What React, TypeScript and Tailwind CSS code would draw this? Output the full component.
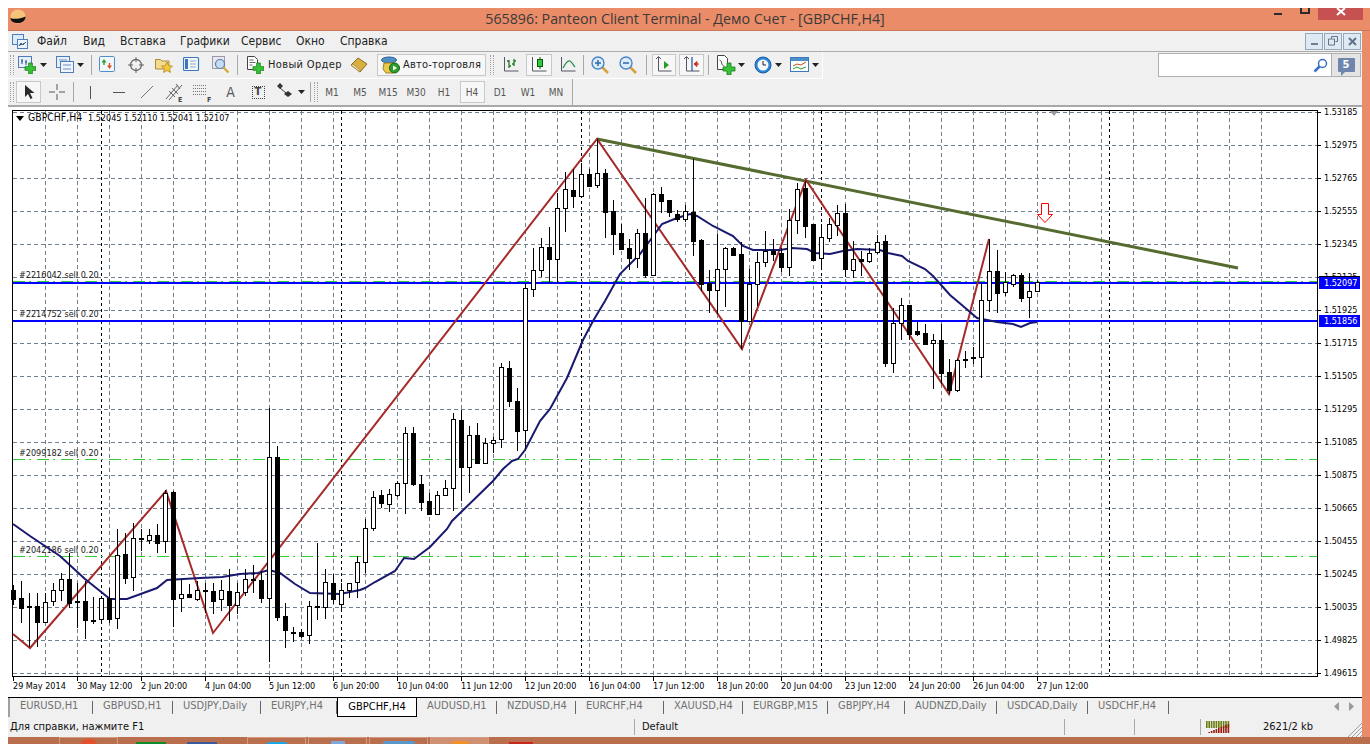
import type { ReactNode } from "react";

const uiFont = "font-['DejaVu_Sans_Condensed','Liberation_Sans',sans-serif]";

// high, body top, body bottom, low, white candle
const candles: [number, number, number, number, number][] = [
  [584, 589, 598, 604, 0], [580, 597, 607, 622, 0], [592, 605, 606, 646, 0], [592, 605, 621, 646, 0],
  [592, 601, 621, 622, 1], [582, 589, 600, 605, 1], [572, 578, 589, 600, 1], [552, 578, 602, 607, 0],
  [582, 600, 601, 627, 0], [580, 600, 619, 638, 0], [596, 619, 620, 623, 0], [595, 597, 618, 622, 1],
  [587, 597, 618, 622, 0], [528, 554, 617, 628, 1], [532, 553, 577, 583, 0], [522, 537, 576, 590, 1],
  [528, 537, 538, 550, 0], [528, 534, 539, 543, 1], [523, 534, 542, 552, 0], [489, 492, 540, 552, 1],
  [490, 491, 598, 626, 0], [578, 593, 597, 611, 1], [583, 593, 596, 597, 0], [580, 589, 598, 600, 1],
  [582, 589, 590, 612, 0], [582, 590, 600, 613, 0], [579, 589, 598, 610, 1], [568, 590, 604, 620, 0],
  [582, 591, 604, 613, 1], [568, 578, 591, 595, 1], [564, 578, 579, 592, 0], [570, 579, 597, 602, 0],
  [407, 456, 597, 661, 1], [445, 456, 616, 620, 0], [602, 615, 629, 647, 0], [626, 631, 632, 641, 0],
  [628, 631, 635, 637, 0], [600, 605, 634, 643, 1], [542, 605, 606, 619, 0], [568, 581, 606, 618, 1],
  [573, 582, 598, 603, 0], [582, 589, 603, 609, 1], [582, 582, 589, 597, 1], [555, 561, 581, 597, 1],
  [518, 527, 561, 572, 1], [490, 496, 527, 530, 1], [489, 494, 502, 507, 0], [488, 493, 503, 511, 1],
  [480, 482, 494, 496, 1], [426, 432, 482, 513, 1], [426, 432, 483, 485, 0], [474, 483, 501, 510, 0],
  [492, 500, 513, 513, 0], [490, 494, 513, 514, 1], [479, 487, 494, 495, 1], [412, 418, 487, 510, 1],
  [409, 419, 466, 500, 0], [425, 434, 466, 492, 1], [422, 434, 462, 462, 0], [437, 442, 462, 462, 1],
  [436, 439, 442, 452, 1], [362, 366, 438, 447, 1], [360, 367, 400, 406, 0], [387, 400, 430, 450, 0],
  [282, 287, 429, 448, 1], [247, 269, 288, 296, 1], [237, 246, 269, 276, 1], [226, 246, 258, 282, 0],
  [192, 207, 258, 282, 1], [171, 188, 207, 231, 1], [168, 189, 195, 207, 0], [162, 173, 195, 196, 1],
  [168, 173, 185, 185, 0], [138, 172, 184, 187, 1], [168, 172, 211, 237, 0], [199, 210, 233, 254, 0],
  [223, 232, 248, 248, 0], [238, 247, 257, 269, 0], [228, 232, 257, 267, 1], [197, 232, 274, 277, 0],
  [192, 193, 274, 275, 1], [186, 193, 200, 212, 0], [199, 199, 211, 216, 0], [209, 213, 218, 221, 0],
  [204, 210, 218, 221, 1], [158, 211, 240, 255, 0], [238, 239, 283, 290, 0], [269, 282, 289, 312, 0],
  [233, 268, 289, 313, 1], [246, 247, 268, 306, 1], [246, 247, 254, 254, 0], [241, 253, 320, 348, 0],
  [268, 283, 320, 320, 1], [251, 261, 283, 305, 1], [230, 250, 261, 266, 1], [238, 250, 253, 260, 0],
  [247, 252, 266, 271, 0], [208, 219, 266, 275, 1], [182, 188, 219, 233, 1], [180, 187, 225, 237, 0],
  [223, 223, 259, 260, 0], [223, 236, 257, 268, 1], [217, 223, 237, 241, 1], [204, 212, 224, 235, 1],
  [203, 212, 268, 276, 0], [240, 258, 269, 277, 1], [250, 258, 260, 275, 0], [247, 252, 260, 262, 1],
  [234, 241, 251, 253, 1], [234, 240, 362, 366, 0], [307, 322, 362, 372, 1], [297, 304, 322, 339, 1],
  [304, 304, 333, 339, 0], [321, 330, 333, 335, 0], [323, 332, 343, 343, 0], [333, 339, 342, 388, 1],
  [323, 339, 372, 383, 0], [358, 371, 389, 393, 0], [358, 359, 389, 391, 1], [350, 358, 359, 367, 1],
  [346, 356, 357, 363, 0], [282, 299, 356, 377, 1], [238, 270, 299, 311, 1], [249, 270, 292, 312, 0],
  [271, 281, 291, 295, 1], [273, 274, 283, 286, 1], [272, 274, 297, 301, 0], [272, 290, 296, 317, 1],
  [279, 281, 290, 290, 1],
];

const maLine =
  "13,523 30,535 60,555 85,578 100,590 110,598 127,598 157,587 167,579 200,577 222,576 240,573 258,572 269,569 280,572 295,583 310,592 340,593 345,592 360,589 365,587 375,581 395,570 404,557 414,558 430,546 447,528 452,520 493,480 503,468 512,460 518,458 525,449 540,420 550,408 567,377 583,339 593,320 605,300 620,273 640,253 657,230 662,223 677,217 690,213 697,215 713,225 733,235 743,245 753,249 780,249 792,247 807,248 815,252 830,253 843,250 857,248 880,249 888,252 902,255 908,260 925,268 933,275 942,285 950,294 963,305 977,317 987,319 997,321 1013,323 1021,326 1030,322 1037,321";

const prices = ["1.53185", "1.52975", "1.52765", "1.52555", "1.52345", "1.52135", "1.51925", "1.51715", "1.51505", "1.51295", "1.51085", "1.50875", "1.50665", "1.50455", "1.50245", "1.50035", "1.49825", "1.49615"];
const dates = ["29 May 2014", "30 May 12:00", "2 Jun 20:00", "4 Jun 04:00", "5 Jun 12:00", "6 Jun 20:00", "10 Jun 04:00", "11 Jun 12:00", "12 Jun 20:00", "16 Jun 04:00", "17 Jun 12:00", "18 Jun 20:00", "20 Jun 04:00", "23 Jun 12:00", "24 Jun 20:00", "26 Jun 04:00", "27 Jun 12:00"];
const gridX = Array.from({ length: 39 }, (_, i) => 45 + i * 32);
const gridY = prices.map((_, i) => 111 + i * 33);

const orders = [
  { label: "#2216042 sell 0.20", y: 277 },
  { label: "#2214752 sell 0.20", y: 316 },
  { label: "#2099182 sell 0.20", y: 455 },
  { label: "#2042186 sell 0.20", y: 552 },
];

function Chart() {
  return (
    <svg width="1354" height="590" viewBox="8 106 1354 590" className={`block shrink-0 bg-white text-[9px] ${uiFont}`}>
      <rect x="12.5" y="109.5" width="1305" height="566" fill="none" stroke="#000" />
      <g shapeRendering="crispEdges">
        {gridY.map((y) => (
          <line key={y} x1="13" x2="1317" y1={y + 0.5} y2={y + 0.5} stroke="#708090" strokeDasharray="4 3" />
        ))}
        {gridX.map((x) => (
          <line key={x} x1={x + 0.5} x2={x + 0.5} y1="110" y2="675" stroke="#708090" strokeDasharray="4 3" />
        ))}
        {[101, 341, 581, 821, 1109].map((x) => (
          <line key={x} x1={x + 0.5} x2={x + 0.5} y1="110" y2="675" stroke="#000" strokeDasharray="3 3" />
        ))}
        <line x1="13" x2="1317" y1="280.5" y2="280.5" stroke="#32CD32" strokeDasharray="12 4 2 6" />
        <line x1="13" x2="1317" y1="458.5" y2="458.5" stroke="#32CD32" strokeDasharray="12 4 2 6" />
        <line x1="13" x2="1317" y1="555.5" y2="555.5" stroke="#32CD32" strokeDasharray="12 4 2 6" />
        <rect x="13" y="281" width="1304" height="2" fill="#0000FF" />
        <rect x="13" y="319" width="1304" height="2" fill="#0000FF" />
      </g>

      {orders.map((o) => (
        <text key={o.y} x="19" y={o.y} fill="#222">{o.label}</text>
      ))}

      <polyline points="597,138 1238,267" fill="none" stroke="#556B2F" strokeWidth="3" />
      <polyline points="13,633 30,647 166,490 213,632 597,138 742,348 806,179 949,393 989,238" fill="none" stroke="#A52A2A" strokeWidth="2" />
      <polyline points={maLine} fill="none" stroke="#191970" strokeWidth="2" />

      <g shapeRendering="crispEdges">
        {candles.map(([h, t, b, l, white], i) => {
          const x = 13 + i * 8;
          return (
            <g key={x}>
              <line x1={x + 0.5} x2={x + 0.5} y1={h} y2={l} stroke="#000" />
              <rect x={x - 1.5} y={t + 0.5} width="4" height={b - t} fill={white ? "#fff" : "#000"} stroke="#000" />
            </g>
          );
        })}
      </g>

      <path d="M1041.5 202.5h7v11h4l-7.5 8-7.5-8h4z" fill="#fff" stroke="#FF0000" />
      <path d="M1050 110l4 5 4-5z" fill="#9a9a9a" />

      <path d="M16 115h8l-4 5z" fill="#000" />
      <text y="120" fill="#000">
        <tspan x="28" fontSize="10.4">GBPCHF,H4</tspan>
        <tspan x="88">1.52045</tspan>
        <tspan x="124">1.52110</tspan>
        <tspan x="160">1.52041</tspan>
        <tspan x="196">1.52107</tspan>
      </text>

      <g shapeRendering="crispEdges">
        {gridY.map((y) => (
          <line key={y} x1="1317" x2="1321" y1={y + 0.5} y2={y + 0.5} stroke="#000" />
        ))}
        {dates.map((_, i) => (
          <line key={i} x1={13.5 + i * 64} x2={13.5 + i * 64} y1="675" y2="680" stroke="#000" />
        ))}
      </g>
      {prices.map((p, i) => (
        <text key={p} x="1324" y={114 + i * 33} fill="#000">{p}</text>
      ))}
      {dates.map((d, i) => (
        <text key={d} x={13 + i * 64} y="688" fill="#000">{d}</text>
      ))}

      <g shapeRendering="crispEdges">
        <rect x="1319" y="275" width="41" height="1" fill="#000" />
        <rect x="1319" y="276" width="41" height="12" fill="#0000FF" />
        <rect x="1319" y="314" width="41" height="12" fill="#0000FF" />
      </g>
      <text x="1324" y="285" fill="#fff">1.52097</text>
      <text x="1324" y="323" fill="#fff">1.51856</text>
    </svg>
  );
}

function Grip({ className = "" }: { className?: string }) {
  return <div className={`h-[20px] w-[4px] shrink-0 border-x border-dotted border-[#a0a0a0] ${className}`} />;
}

function Sep({ className = "" }: { className?: string }) {
  return <div className={`h-[20px] w-px shrink-0 bg-[#a8a8a8] ${className}`} />;
}

function Caret() {
  return (
    <div className="flex w-[10px] shrink-0 justify-center">
      <svg width="7" height="4"><path d="M0 0h7L3.500 4z" fill="#222" /></svg>
    </div>
  );
}

function Cell({ className, children }: { className: string; children?: ReactNode }) {
  return <div className={`flex h-full shrink-0 items-center justify-center ${className}`}>{children}</div>;
}

function Pressed({ className, children }: { className: string; children: ReactNode }) {
  return (
    <div className={`flex h-[22px] shrink-0 items-center border border-[#c8c8c8] bg-[#f7f7f7] ${className}`}>
      {children}
    </div>
  );
}

function Plus({ x = 7, y = 7, s = 11 }: { x?: number; y?: number; s?: number }) {
  const a = s / 3;
  return (
    <path
      transform={`translate(${x} ${y})`}
      d={`M${a} 0h${a}v${a}h${a}v${a}h${-a}v${a}h${-a}v${-a}H0V${a}h${a}z`}
      fill="#35c435"
      stroke="#1c7a1c"
      strokeWidth="0.8"
    />
  );
}

function Icon({ w = 18, h = 18, children }: { w?: number; h?: number; children: ReactNode }) {
  return <svg width={w} height={h} viewBox={`0 0 ${w} ${h}`} fill="none" className="block shrink-0">{children}</svg>;
}

const NewChartIcon = () => (
  <Icon>
    <rect x="0.5" y="0.5" width="13" height="11" fill="#e6f0fb" stroke="#4f7db8" />
    <path d="M4 3v5M8 4v5M3 5h2M7 6h2" stroke="#2a4f86" />
    <Plus />
  </Icon>
);
const ProfilesIcon = () => (
  <Icon>
    <rect x="0.5" y="0.5" width="13" height="11" fill="#e6f0fb" stroke="#4f7db8" />
    <rect x="4.5" y="5.5" width="13" height="11" fill="#eef4fc" stroke="#4f7db8" />
    <path d="M3 4h8M7 9h8M7 13h8" stroke="#6d8fbe" />
  </Icon>
);
const WatchIcon = () => (
  <Icon>
    <rect x="0.5" y="0.5" width="15" height="15" rx="1" fill="#f2f7fc" stroke="#4f8fc8" />
    <path d="M5 3L2.500 6.500h1.800V9h1.400V6.500h1.800z" fill="#2e9a2e" />
    <path d="M10.500 13L8 9.500h1.800V7h1.400v2.500h1.800z" fill="#e0501c" />
  </Icon>
);
const CrossCircleIcon = () => (
  <Icon>
    <circle cx="9" cy="9" r="5.5" stroke="#666" strokeWidth="1.3" />
    <path d="M9 1v5M9 12v5M1 9h5M12 9h5" stroke="#666" />
  </Icon>
);
const FolderStarIcon = () => (
  <Icon>
    <path d="M0.500 3.500h5l1.500 1.500h7v8h-13.500z" fill="#f5dc8c" stroke="#a88a3a" />
    <path d="M12 6l1.700 3.700 3.800.4-2.900 2.500.9 3.900-3.500-2-3.500 2 .9-3.900-2.900-2.500 3.800-.4z" fill="#f7c83a" stroke="#b08a20" strokeWidth="0.8" />
  </Icon>
);
const TerminalIcon = () => (
  <Icon>
    <rect x="0.5" y="1.5" width="15" height="13" rx="1" fill="#f4f8fd" stroke="#3a78c0" strokeWidth="1.2" />
    <rect x="2" y="3" width="3" height="10" fill="#3a78c0" />
    <path d="M7 5h6M7 8h6M7 11h6" stroke="#8aa8cc" />
  </Icon>
);
const TesterIcon = () => (
  <Icon>
    <rect x="0.5" y="0.5" width="12" height="12" fill="#e8e8ee" stroke="#9a9aa8" />
    <circle cx="8" cy="8" r="4.5" fill="#c6dcf2" stroke="#5a7ca8" strokeWidth="1.2" />
    <path d="M11.500 11.500l5 5" stroke="#d8a73a" strokeWidth="2.2" />
  </Icon>
);
const NewOrderIcon = () => (
  <Icon>
    <path d="M1.500 0.500h7l3 3v10h-10z" fill="#fff" stroke="#444" />
    <path d="M3.500 4h4M3.500 6.500h6M3.500 9h3" stroke="#666" />
    <Plus />
  </Icon>
);
const BookIcon = () => (
  <Icon>
    <path d="M1 9l7-7 9 6-7 8z" fill="#d8b040" stroke="#8a6a20" />
    <path d="M1 9l9 7v-2L3 8z" fill="#f5e6b0" stroke="#8a6a20" strokeWidth="0.6" />
  </Icon>
);
const AutoTradeIcon = () => (
  <Icon w={19} h={18}>
    <ellipse cx="8" cy="4" rx="7.5" ry="3" fill="#4f8fc8" stroke="#2e5f96" />
    <path d="M3 7h11l1 6-3 4H5l-3-4z" fill="#ecc94a" stroke="#a08420" />
    <circle cx="13.500" cy="12" r="5" fill="#2aa02a" stroke="#156015" />
    <path d="M12 9.500l4 2.500-4 2.500z" fill="#fff" />
  </Icon>
);
const BarsIcon = () => (
  <Icon>
    <path d="M2.500 1v14h14" stroke="#556" />
    <path d="M7 4v8M5 5h2M7 10h2M12 3v7M10 8h2M12 5h2" stroke="#1f7a1f" strokeWidth="1.3" />
  </Icon>
);
const CandlesIcon = () => (
  <Icon>
    <path d="M2.500 1v14h14" stroke="#556" />
    <path d="M10 1v12" stroke="#0a5a0a" />
    <rect x="7.5" y="3.5" width="5" height="7" fill="#2ecc40" stroke="#0a5a0a" />
  </Icon>
);
const LineIcon = () => (
  <Icon>
    <path d="M2.500 1v14h14" stroke="#556" />
    <path d="M4 12c3-6 5-8 7-7s3 4 5 6" stroke="#1f8a3a" strokeWidth="1.2" />
  </Icon>
);
const ZoomIcon = ({ plus }: { plus?: boolean }) => (
  <Icon>
    <path d="M11 11l6 6" stroke="#d3a23a" strokeWidth="2.5" />
    <circle cx="7" cy="7" r="6" fill="#dcecfa" stroke="#4a86c6" strokeWidth="1.4" />
    <path d={plus ? "M4 7h6M7 4v6" : "M4 7h6"} stroke="#2f68a8" strokeWidth="1.5" />
  </Icon>
);
const AutoScrollIcon = () => (
  <Icon>
    <path d="M3.500 1v14h13M1 3l2.500-2.500L6 3" stroke="#556" />
    <path d="M9 5v8l5-4z" fill="#22a022" />
  </Icon>
);
const ChartShiftIcon = () => (
  <Icon>
    <path d="M3.500 1v14h13M1 3l2.500-2.500L6 3" stroke="#556" />
    <path d="M9 1v14" stroke="#2c5f9e" strokeWidth="1.3" />
    <path d="M16 8h-3M11 8l3-2.500v5z" fill="#d03020" stroke="#d03020" />
  </Icon>
);
const TemplateIcon = () => (
  <Icon w={20} h={20}>
    <path d="M1.500 0.500h7l3 3v11h-10z" fill="#fff" stroke="#444" />
    <path d="M3.500 5c3 0 1 6 5 6" stroke="#555" />
    <Plus x={7} y={8} s={12} />
  </Icon>
);
const ClockIcon = () => (
  <Icon>
    <circle cx="9" cy="9" r="8" fill="#2e86d8" stroke="#1a5a9e" />
    <circle cx="9" cy="9" r="5.5" fill="#f4f8fc" />
    <path d="M9 5v4h3" stroke="#222" />
  </Icon>
);
const IndicatorIcon = () => (
  <Icon w={20} h={18}>
    <rect x="0.5" y="1.5" width="18" height="14" fill="#fff" stroke="#3a78c0" />
    <rect x="1" y="2" width="17" height="3" fill="#4f8fc8" />
    <path d="M3 10l4-2 4 1 5-3" stroke="#c05020" />
    <path d="M3 13l4-2 4 2 5-2" stroke="#2e9a2e" />
  </Icon>
);
const CursorIcon = () => (
  <Icon>
    <path d="M5 2v12l3-3 2.500 5 2-1-2.500-5h4.500z" fill="#2a2a2a" />
  </Icon>
);
const CrosshairIcon = () => (
  <Icon>
    <path d="M9 1v6M9 11v6M1 9h6M11 9h6" stroke="#555" />
  </Icon>
);
const ChannelIcon = () => (
  <Icon w={22} h={24}>
    <path d="M2 19L14 5M5 20L18 5M5 11l6 6M8 8l6 6M12 4l4 5" stroke="#666" />
    <text x="14" y="22" fontSize="7" fontWeight="bold" fill="#444">E</text>
  </Icon>
);
const FiboIcon = () => (
  <Icon w={22} h={24}>
    <path d="M1 5.500h14M1 8.500h14M1 11.500h14M1 14.500h14" stroke="#777" strokeDasharray="1 1" />
    <text x="15" y="22" fontSize="7" fontWeight="bold" fill="#444">F</text>
  </Icon>
);
const ArrowsIcon = () => (
  <Icon>
    <path d="M2 3l3-3 3 3-3 3zM9 11l4-3 4 3-4 3z" fill="#333" />
    <path d="M5 5l6 5" stroke="#333" />
  </Icon>
);

function Toolbar1() {
  return (
    <div className="flex h-[27px] w-[815px] shrink-0 items-center border-r border-b border-white bg-[#f0f0f0]">
      <div className="flex w-[8px] shrink-0 justify-start pl-[2px]"><Grip /></div>
      <Cell className="w-[22px]"><NewChartIcon /></Cell>
      <Caret />
      <Cell className="ml-[6px] w-[21px]"><ProfilesIcon /></Cell>
      <Caret />
      <Sep className="ml-[6px]" />
      <Cell className="w-[32px]"><WatchIcon /></Cell>
      <Cell className="w-[24px]"><CrossCircleIcon /></Cell>
      <Cell className="w-[32px]"><FolderStarIcon /></Cell>
      <Cell className="w-[24px]"><TerminalIcon /></Cell>
      <Cell className="w-[33px]"><TesterIcon /></Cell>
      <Sep />
      <Cell className="ml-[4px] w-[26px]"><NewOrderIcon /></Cell>
      <div className="w-[73px] shrink-0 text-[11px] tracking-[0.35px] whitespace-nowrap text-[#222]">Новый Ордер</div>
      <Cell className="w-[36px]"><BookIcon /></Cell>
      <Pressed className="w-[109px] pl-[3px]">
        <AutoTradeIcon />
        <span className="ml-[3px] text-[11px] tracking-[0.2px] whitespace-nowrap text-[#222]">Авто-торговля</span>
      </Pressed>
      <Grip className="ml-[4px]" />
      <Cell className="ml-[1px] w-[31px]"><BarsIcon /></Cell>
      <Pressed className="w-[26px] justify-center"><CandlesIcon /></Pressed>
      <Cell className="w-[31px]"><LineIcon /></Cell>
      <Sep />
      <Cell className="w-[32px]"><ZoomIcon plus /></Cell>
      <Cell className="w-[24px]"><ZoomIcon /></Cell>
      <Cell className="w-[6px]" />
      <Sep />
      <Pressed className="ml-[5px] w-[24px] justify-center"><AutoScrollIcon /></Pressed>
      <Pressed className="ml-[3px] w-[25px] justify-center"><ChartShiftIcon /></Pressed>
      <Sep className="ml-[4px]" />
      <Cell className="ml-[7px] w-[20px]"><TemplateIcon /></Cell>
      <Caret />
      <Cell className="ml-[7px] w-[20px]"><ClockIcon /></Cell>
      <Caret />
      <Cell className="ml-[7px] w-[20px]"><IndicatorIcon /></Cell>
      <Caret />
    </div>
  );
}

const frames = ["M1", "M5", "M15", "M30", "H1", "H4", "D1", "W1", "MN"];

function Toolbar2() {
  return (
    <div className="flex h-[26px] shrink-0 items-center bg-[#f0f0f0]">
      <div className="flex w-[8px] shrink-0 justify-start pl-[2px]"><Grip /></div>
      <Pressed className="w-[25px] justify-center"><CursorIcon /></Pressed>
      <Cell className="w-[32px]"><CrosshairIcon /></Cell>
      <Sep />
      <Cell className="w-[32px]"><div className="h-[13px] w-px bg-[#555]" /></Cell>
      <Cell className="w-[26px]"><div className="h-px w-[12px] bg-[#555]" /></Cell>
      <Cell className="w-[30px]">
        <Icon w={14} h={14}><path d="M1 13L13 1" stroke="#777" /></Icon>
      </Cell>
      <Cell className="w-[26px]"><ChannelIcon /></Cell>
      <Cell className="w-[29px]"><FiboIcon /></Cell>
      <Cell className="w-[27px] text-[14px] text-[#555]">A</Cell>
      <Cell className="w-[28px]">
        <div className="flex h-[13px] w-[13px] items-center justify-center border border-dotted border-[#444] text-[11px] font-bold text-[#444]">T</div>
      </Cell>
      <Cell className="w-[24px]"><ArrowsIcon /></Cell>
      <Caret />
      <Sep className="ml-[4px]" />
      <Grip className="ml-[3px]" />
      {frames.map((f) => (
        <Cell key={f} className="w-[28px]">
          {f === "H4" ? (
            <div className="flex h-[22px] w-[25px] items-center justify-center border border-[#c8c8c8] bg-[#f7f7f7] text-[10px] text-[#555]">{f}</div>
          ) : (
            <span className="text-[10px] text-[#555]">{f}</span>
          )}
        </Cell>
      ))}
      <Sep className="ml-[2px] h-[26px]" />
    </div>
  );
}

const tabs = [
  { name: "EURUSD,H1", w: "w-[83px]" },
  { name: "GBPUSD,H1", w: "w-[80px]" },
  { name: "USDJPY,Daily", w: "w-[88px]" },
  { name: "EURJPY,H4", w: "w-[76px]" },
  { name: "GBPCHF,H4", w: "w-[80px]", active: true },
  { name: "AUDUSD,H1", w: "w-[80px]" },
  { name: "NZDUSD,H4", w: "w-[79px]" },
  { name: "EURCHF,H4", w: "w-[88px]" },
  { name: "XAUUSD,H4", w: "w-[79px]" },
  { name: "EURGBP,M15", w: "w-[85px]" },
  { name: "GBPJPY,H4", w: "w-[77px]" },
  { name: "AUDNZD,Daily", w: "w-[92px]" },
  { name: "USDCAD,Daily", w: "w-[91px]" },
  { name: "USDCHF,H4", w: "w-[81px]" },
];

function Tabs() {
  return (
    <div className={`flex h-[20px] shrink-0 items-start border-t border-black bg-[#f0f0f0] pr-[8px] text-[11px] ${uiFont}`}>
      <div className="h-full w-[2px] shrink-0 bg-[#a0a0a0]" />
      {tabs.map((t) =>
        t.active ? (
          <div key={t.name} className={`flex h-[19px] shrink-0 items-center justify-center border-x border-b border-black bg-white text-black ${t.w}`}>{t.name}</div>
        ) : (
          <div key={t.name} className={`flex h-[17px] shrink-0 items-center pl-[10px] text-[#707070] ${t.w}`}>
            <span className="flex-1 whitespace-nowrap">{t.name}</span>
            <div className="mt-[2px] h-[13px] w-px bg-[#666]" />
          </div>
        ),
      )}
      <div className="ml-auto flex h-[17px] items-center gap-[10px] text-[#999]">
        <svg width="5" height="9"><path d="M5 0v9L0 4.500z" fill="#999" /></svg>
        <svg width="5" height="9"><path d="M0 0v9l5-4.500z" fill="#999" /></svg>
      </div>
    </div>
  );
}

function StatusBar() {
  return (
    <div className={`relative flex h-[20px] shrink-0 items-center bg-[#f0f0f0] pl-[2px] text-[11px] text-[#111] ${uiFont}`}>
      <div className="w-[624px] whitespace-nowrap">Для справки, нажмите F1</div>
      <div className="h-[16px] w-px bg-[#a8a8a8]" />
      <div className="w-[429px] pl-[7px]">Default</div>
      <div className="h-[16px] w-px bg-[#a8a8a8]" />
      <div className="w-[69px]" />
      <div className="h-[16px] w-px bg-[#a8a8a8]" />
      <div className="w-[65px]" />
      <div className="h-[16px] w-px bg-[#a8a8a8]" />
      <svg width="24" height="14" className="ml-[5px]">
        {Array.from({ length: 10 }, (_, i) => (
          <g key={i}>
            <rect x={i * 2.4} y="1" width="1.6" height={7} fill="#6b7d10" />
            <rect x={i * 2.4} y={13 - i} width="1.6" height={i} fill="#9a1c0c" />
          </g>
        ))}
      </svg>
      <div className="ml-[33px] whitespace-nowrap">2621/2 kb</div>
      <svg width="14" height="14" className="absolute right-0 bottom-0">
        <path d="M14 0L0 14M14 4L4 14M14 8L8 14M14 12l-2 2" stroke="#a0a0a0" />
      </svg>
    </div>
  );
}

function MdiButton({ children }: { children: ReactNode }) {
  return (
    <div className="flex h-[17px] w-[18px] items-center justify-center border border-[#94a9bc] bg-[#dfe9f3]">
      {children}
    </div>
  );
}

function TaskButton({ className, children }: { className: string; children?: ReactNode }) {
  return <div className={`flex h-full justify-center border-x border-t border-[#d49a80] ${className}`}>{children}</div>;
}

export default function App() {
  return (
    <div className={`h-[744px] w-[1370px] overflow-hidden bg-white pt-[8px] pl-[8px] ${uiFont}`}>
      <div className="flex h-[736px] flex-col bg-[#ea8c68]">
        <div className="relative flex h-[23px] shrink-0 items-center border-b border-[#c97a5a]">
          <svg width="16" height="15" className="absolute left-[2px] top-[1px]">
            <ellipse cx="8" cy="7.5" rx="7.5" ry="7" fill="#f4c27a" />
            <path d="M0.500 9c3 1.500 10 1 15-1.500 0 4-3 6.500-7.500 6.500S0.500 12 0.500 9z" fill="#111" />
          </svg>
          <div className="w-[1354px] text-center font-['Open_Sans','Noto_Sans',sans-serif] text-[14.25px] leading-none whitespace-nowrap text-[#3a3a3a]">
            565896: Panteon Client Terminal - Демо Счет - [GBPCHF,H4]
          </div>
          <div className="absolute top-[5px] left-[1266px] h-[2px] w-[8px] bg-[#2b2b2b]" />
          <div className="absolute top-0 left-[1292px] h-[6px] w-[10px] border-x-2 border-b-2 border-[#2b2b2b]" />
          <div className="absolute top-0 left-[1310px] flex h-[12px] w-[45px] items-start justify-center bg-[#c75050]">
            <svg width="10" height="8"><path d="M1 0l8 7M9 0L1 7" stroke="#fff" strokeWidth="2" /></svg>
          </div>
        </div>

        <div className="flex w-[1354px] flex-1 flex-col bg-[#f0f0f0]">
          <div className="flex h-[21px] shrink-0 items-center border-b border-[#aaaaaa] text-[12px] text-[#222]">
            <svg width="16" height="15" className="ml-[4px]">
              <rect x="0.5" y="0.5" width="11" height="10" fill="#dceafa" stroke="#4f7db8" />
              <rect x="5.5" y="5.5" width="10" height="9" fill="#eef4fc" stroke="#4f7db8" />
              <path d="M7 12l2-3 2 2 3-3" stroke="#3a66a0" />
            </svg>
            <div className="ml-[9px] w-[46px]">Файл</div>
            <div className="w-[37px]">Вид</div>
            <div className="w-[60px]">Вставка</div>
            <div className="w-[61px]">Графики</div>
            <div className="w-[55px]">Сервис</div>
            <div className="w-[44px]">Окно</div>
            <div>Справка</div>
            <div className="mr-[1px] ml-auto flex gap-px">
              <MdiButton><div className="mt-[6px] h-[2px] w-[7px] bg-[#6a7f92]" /></MdiButton>
              <MdiButton>
                <svg width="10" height="10"><path d="M3.500 2.500V.5h6v5h-2M.5 3h6v6h-6z" fill="none" stroke="#5f7488" /></svg>
              </MdiButton>
              <MdiButton>
                <svg width="9" height="9"><path d="M1 1l7 7M8 1L1 8" stroke="#5f7488" strokeWidth="2" /></svg>
              </MdiButton>
            </div>
          </div>

          <div className="relative flex h-[27px] shrink-0 items-center">
            <Toolbar1 />
            <div className="absolute top-[1px] left-[1150px] flex h-[24px] w-[203px]">
              <div className="flex flex-1 items-center justify-end border border-[#b0b0b0] bg-white pr-[3px]">
                <svg width="15" height="15">
                  <circle cx="9.5" cy="5.5" r="4" fill="none" stroke="#3a6fc8" strokeWidth="1.5" />
                  <path d="M6.500 8.500L1.500 13.500" stroke="#3a6fc8" strokeWidth="2.5" />
                </svg>
              </div>
              <div className="flex w-[29px] items-center justify-center border-y border-r border-[#b0b0b0] bg-[#e4e4e4]">
                <div className="relative flex h-[14px] w-[17px] items-center justify-center rounded-[1px] bg-[#6e86ae] text-[11px] font-bold text-white">
                  5
                  <div className="absolute -bottom-[4px] left-[3px] h-0 w-0 border-t-[5px] border-r-[5px] border-t-[#6e86ae] border-r-transparent" />
                </div>
              </div>
            </div>
          </div>

          <Toolbar2 />
          <div className="h-[2px] shrink-0 bg-[#a8a8a8]" />
          <Chart />
          <Tabs />
          <StatusBar />
        </div>

        <div className="flex h-[8px] shrink-0 items-start gap-[2px] overflow-hidden bg-[#b96e4e] pl-[51px]">
          <TaskButton className="w-[59px]"><div className="mt-[1px] h-[6px] w-[16px] rounded-t-full bg-[#e2502c]" /></TaskButton>
          <div className="ml-[16px] mt-[5px] h-[3px] w-[30px] bg-[#0f8a2c]" />
          <div className="ml-[19px] mt-[5px] h-[3px] w-[30px] bg-[#3a5a9e]" />
          <TaskButton className="ml-[28px] w-[59px]"><div className="mt-[4px] h-[4px] w-[22px] rounded-t-full bg-[#18a8e8]" /></TaskButton>
          <TaskButton className="w-[59px]"><div className="mt-[3px] h-[5px] w-[14px] bg-[#7fa8d8]" /></TaskButton>
          <TaskButton className="w-[59px]"><div className="mt-[3px] h-[5px] w-[32px] rounded-t-[2px] bg-[#5a98cc]" /></TaskButton>
          <TaskButton className="w-[59px] bg-[#cf8f72]"><div className="mt-[3px] h-[5px] w-[20px] rounded-t-full bg-[#f0922c]" /></TaskButton>
          <div className="ml-[18px] mt-[5px] h-[3px] w-[24px] bg-[#c8281c]" />
        </div>
      </div>
    </div>
  );
}
